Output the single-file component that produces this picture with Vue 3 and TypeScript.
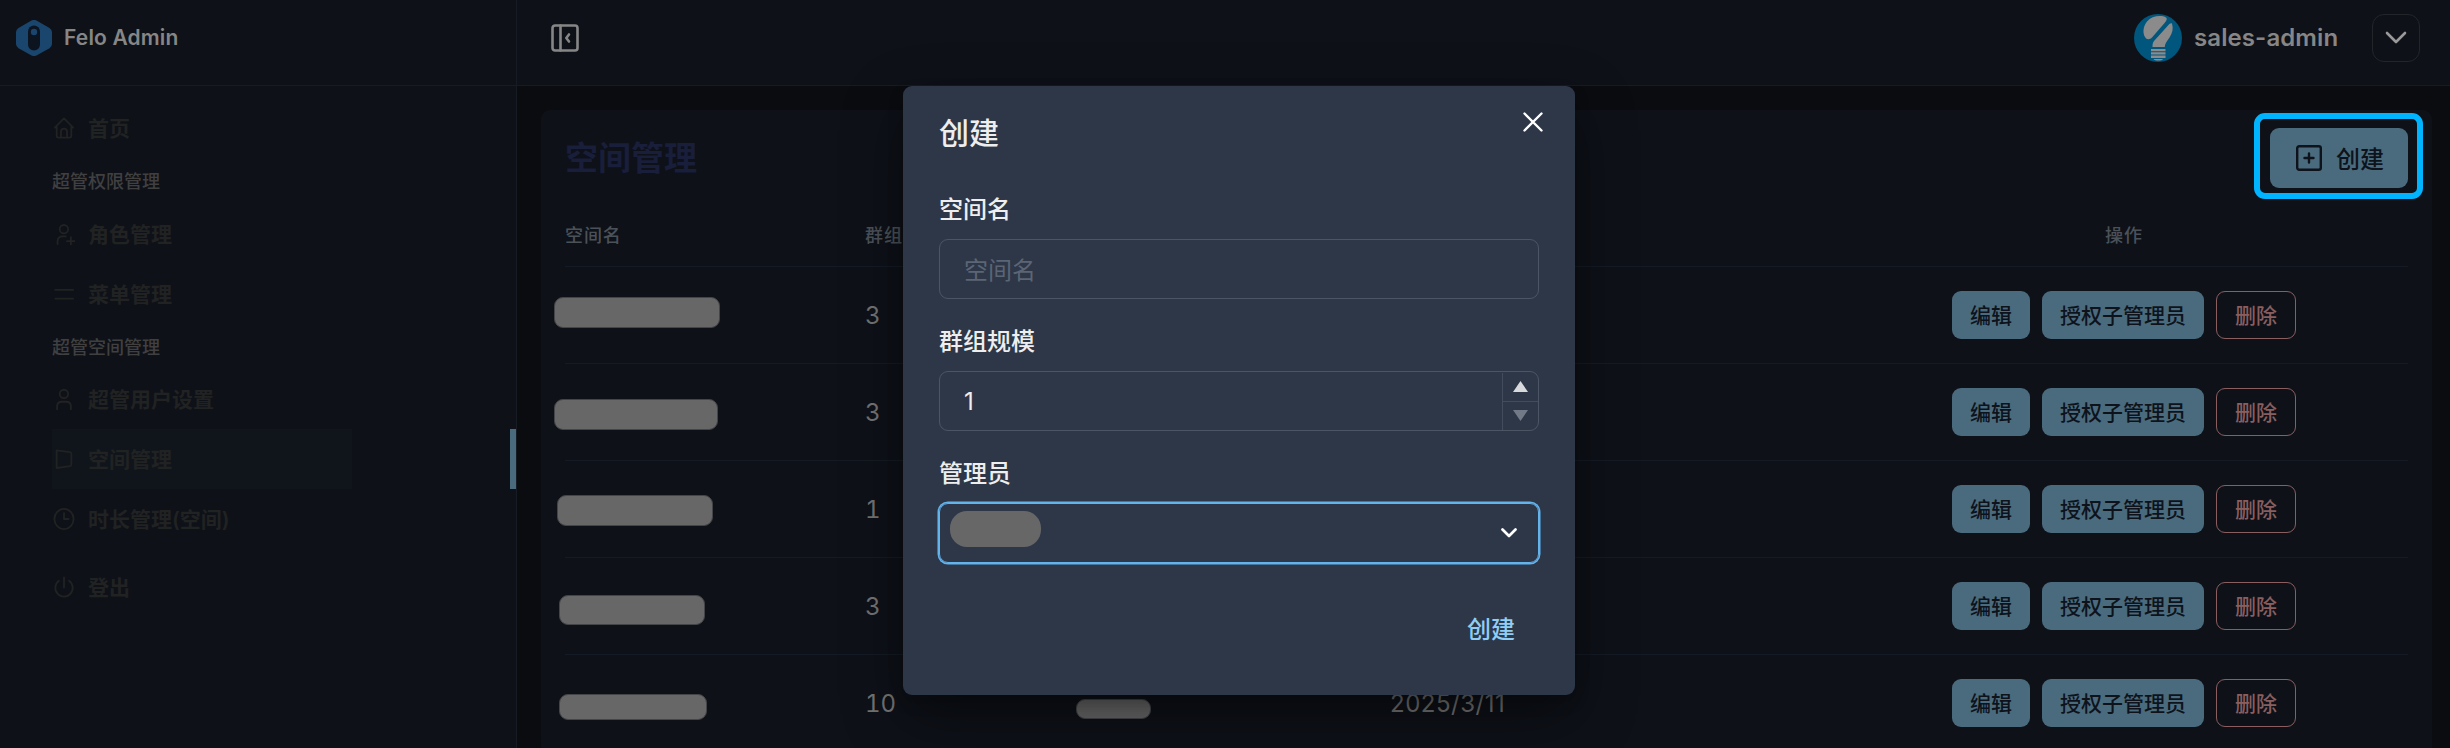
<script setup lang="ts">
interface Mask { x: number; y: number; w: number; h: number }
interface Row { size: string; mask: Mask; date?: string }
interface Item { icon: string; label: string; active?: boolean }
interface Group { title: string; items: Item[] }

const home: Item = { icon: 'home', label: '首页' }
const groups: Group[] = [
  { title: '超管权限管理', items: [{ icon: 'role', label: '角色管理' }, { icon: 'menu', label: '菜单管理' }] },
  {
    title: '超管空间管理',
    items: [
      { icon: 'user', label: '超管用户设置' },
      { icon: 'space', label: '空间管理', active: true },
      { icon: 'clock', label: '时长管理(空间)' },
    ],
  },
]
const icons: Record<string, string> = {
  home: 'M2 11.5 12 1.5l10 10M4 10v10.5a2 2 0 0 0 2 2h12a2 2 0 0 0 2-2V10M8.7 22.5V16a3.3 3.3 0 0 1 6.6 0v6.5',
  role: 'M16.5 6.8a4.6 4.6 0 1 1-9.2 0a4.6 4.6 0 1 1 9.2 0M5 23v-3c0-3.5 2-5.5 5.5-5.5H14M19.5 15.5v8.5M15.3 19.8h8.5',
  menu: 'M2.5 7.5h19.5M2.5 17h19.5',
  user: 'M16.5 6.5a4.6 4.6 0 1 1-9.2 0a4.6 4.6 0 1 1 9.2 0M4.5 23.5v-3.5c0-3 2-5 5-5h5c3 0 5 2 5 5v3.5',
  space: 'M4 2.5 18.5 4.5Q20 4.8 20 6V18Q20 19.500 18.500 19.800L4 21.800Z',
  clock: 'M22.500 12a10.500 11 0 1 1-21 0a10.500 11 0 1 1 21 0M12 5.500V12h5',
  power: 'M6.500 5.200a9.500 9.500 0 1 0 11 0M12 1.500v11',
}
const rows: Row[] = [
  { size: '3', mask: { x: -11, y: 30, w: 166, h: 31 } },
  { size: '3', mask: { x: -11, y: 35, w: 164, h: 31 } },
  { size: '1', mask: { x: -8, y: 34, w: 156, h: 31 } },
  { size: '3', mask: { x: -6, y: 37, w: 146, h: 30 } },
  { size: '10', date: '2025/3/11', mask: { x: -6, y: 39, w: 148, h: 26 } },
]
const maskStyle = (m: Mask) => ({ left: `${m.x}px`, top: `${m.y}px`, width: `${m.w}px`, height: `${m.h}px` })
</script>

<template>
  <div class="page">
    <aside class="sidebar">
      <div class="brand">
        <svg class="logo" viewBox="0 0 36 36">
          <path d="M15.500.600a5 5 0 0 1 5 0L33.500 8A5 5 0 0 1 36 12v12a5 5 0 0 1-2.500 4.200l-13 7.200a5 5 0 0 1-5 0l-13-7.200A5 5 0 0 1 0 24V12a5 5 0 0 1 2.500-4Z" fill="#1a456d" />
          <rect x="12" y="5.500" width="12" height="25" rx="6" fill="#0c1420" />
          <circle cx="18" cy="12" r="3.200" fill="#1a456d" />
        </svg>
        <span>Felo Admin</span>
      </div>
      <nav>
        <div class="item">
          <svg viewBox="0 0 24 24"><path :d="icons.home" /></svg><span>{{ home.label }}</span>
        </div>
        <template v-for="g in groups" :key="g.title">
          <div class="group">{{ g.title }}</div>
          <div v-for="i in g.items" :key="i.label" class="line" :class="{ active: i.active }">
            <div class="item">
              <svg viewBox="0 0 24 24"><path :d="icons[i.icon]" /></svg><span>{{ i.label }}</span>
            </div>
          </div>
        </template>
        <div class="item logout">
          <svg viewBox="0 0 24 24"><path :d="icons.power" /></svg><span>登出</span>
        </div>
      </nav>
    </aside>

    <div class="main">
      <header>
        <svg class="toggle" viewBox="0 0 28 28">
          <rect x="1.500" y="1.500" width="25" height="25" rx="2.500" />
          <path d="M9.500 1.500v25M18 10.500 15.300 14l2.700 3.500" />
        </svg>
        <div class="account">
          <svg class="avatar" viewBox="0 0 48 48">
            <circle cx="24" cy="24" r="24" fill="#00567c" />
            <path d="M32 3.500C27 .8 17.500 2 13 7.500 9 12.500 8.500 19 11 23c1.500 3 5 2.500 7 .5L31 8.500c1.500-2 2.500-4 1-5Z" fill="#8b8b8b" />
            <path d="M38 9.500c-1.500-.8-3 .5-4 2L20 27c-1.500 2-1.500 4-1.500 6h12.200c.3-4 2.300-5.500 4.800-9.500C38.500 19 39.500 14.500 38 9.500Z" fill="#8b8b8b" />
            <path d="M17 35h14.500v2.300H17ZM17 38.300h14.500v2.300H17ZM17 41.600h14.500v2.300H17ZM19.500 45h9.500c-1 2-8.500 2-9.500 0Z" fill="#8b8b8b" />
          </svg>
          <span class="name">sales-admin</span>
          <button class="more"><svg viewBox="0 0 22 14"><path d="M2 2l9 9 9-9" /></svg></button>
        </div>
      </header>

      <section class="card">
        <div class="card-head">
          <h2>空间管理</h2>
          <button class="create">
            <svg viewBox="0 0 26 26"><rect x="1.200" y="1.200" width="23.600" height="23.600" rx="2" /><path d="M13 8.500v9M8.500 13h9" /></svg>
            <span>创建</span>
            <i class="highlight"></i>
          </button>
        </div>
        <div class="row head">
          <div>空间名</div><div>群组</div><div></div><div></div><div class="center">操作</div>
        </div>
        <div v-for="(r, n) in rows" :key="n" class="row">
          <div class="cell"><i class="mask" :style="maskStyle(r.mask)"></i></div>
          <div class="cell num">{{ r.size }}</div>
          <div class="cell"><i v-if="r.date" class="mask small"></i></div>
          <div class="cell date">{{ r.date }}</div>
          <div class="cell actions">
            <button>编辑</button><button>授权子管理员</button><button class="danger">删除</button>
          </div>
        </div>
      </section>
    </div>

    <div class="modal">
      <svg class="close" viewBox="0 0 20 20"><path d="M1.500 1.500l17 17M18.500 1.500l-17 17" /></svg>
      <h3>创建</h3>
      <label>空间名</label>
      <div class="field placeholder"><span>空间名</span></div>
      <label>群组规模</label>
      <div class="field number">
        <span>1</span>
        <div class="stepper">
          <div><svg viewBox="0 0 15 11"><path d="M7.500 0 15 11H0Z" /></svg></div>
          <div class="down"><svg viewBox="0 0 15 11"><path d="M7.500 11 15 0H0Z" /></svg></div>
        </div>
      </div>
      <label>管理员</label>
      <div class="field select">
        <i class="chip"></i>
        <svg viewBox="0 0 16 10"><path d="M1.500 1.500 8 8l6.500-6.500" /></svg>
      </div>
      <div class="foot">创建</div>
    </div>
  </div>
</template>

<style>
body { background: #0b0c10; overflow: hidden; }
</style>
<style scoped>
* { box-sizing: border-box; }
.page {
  position: relative; display: flex; width: 2450px; height: 748px; overflow: hidden;
  background: #0b0c10; font-family: Inter, "Noto Sans CJK SC", sans-serif; color: #727272;
}
button { font: inherit; margin: 0; }
svg { flex: none; fill: none; stroke-linecap: round; stroke-linejoin: round; }
.sidebar { width: 517px; flex: none; background: #0e1118; border-right: 1px solid #171b24; }
.brand {
  display: flex; align-items: center; gap: 12px; height: 86px; padding: 0 0 10px 16px;
  border-bottom: 1px solid #171b24; color: #868686; font-size: 21px; font-weight: 600; letter-spacing: .15px;
}
.logo { width: 36px; height: 36px; }
nav { padding: 12px 0 0 52px; }
.item { display: flex; align-items: center; gap: 13px; width: 300px; height: 60px; padding-left: 1px; font-size: 21px; font-weight: 600; color: #212222; }
.item span { margin-top: -2px; }
.item svg { width: 22px; height: 22px; stroke: #212222; stroke-width: 2; }
.group { height: 45.500px; line-height: 47px; font-size: 18px; font-weight: 500; color: #404041; }
.line { display: flex; justify-content: space-between; }
.active .item { background: #10151c; }
.active::after { content: ""; width: 6px; height: 60px; background: #4a6b7e; }
.logout { margin-top: 8px; }

.main { flex: 1; min-width: 0; }
header { display: flex; align-items: center; justify-content: space-between; height: 86px; padding: 0 30px 10px 34px; background: #0e1118; border-bottom: 1px solid #171b24; }
.toggle { width: 28px; height: 28px; stroke: #868686; stroke-width: 2.600; }
.account { display: flex; align-items: center; }
.avatar { width: 48px; height: 48px; }
.name { margin-left: 12px; width: 190px; margin-right: -12px; font-size: 24px; font-weight: 600; letter-spacing: .1px; color: #868686; }
.more { display: flex; align-items: center; justify-content: center; width: 48px; height: 48px; padding: 0; background: none; border: 1px solid #22262b; border-radius: 12px; }
.more svg { width: 22px; height: 14px; stroke: #999; stroke-width: 2.600; }

.card { width: 1891px; height: 700px; margin: 24px 0 0 24px; padding: 18px 24px; background: #0e1118; border-radius: 9px; }
.card-head { display: flex; align-items: center; justify-content: space-between; height: 60px; }
h2 { margin: 0; font-size: 33px; line-height: 60px; font-weight: 600; color: #191e3a; }
.create { position: relative; display: flex; align-items: center; gap: 14px; width: 138px; height: 60px; padding: 0 0 0 26px; border: 0; border-radius: 9px; background: #4a6b7e; color: #0e131b; font-size: 24px; font-weight: 500; }
.create span { margin-top: -2px; }
.create svg { width: 26px; height: 26px; stroke: #0e131b; stroke-width: 2.400; }
.highlight { position: absolute; left: -16px; top: -15px; width: 169px; height: 86px; border: 6px solid #00b4ff; border-radius: 11px; }
.row { display: grid; grid-template-columns: 300px 225px 300px 562px 1fr; height: 97px; border-bottom: 1px solid #151b24; }
.row.head { height: 79px; padding-top: 17px; line-height: 62px; font-size: 18px; font-weight: 500; letter-spacing: .9px; color: #4b5158; }
.center { width: 344px; text-align: center; }
.cell { position: relative; display: flex; align-items: center; font-size: 24px; color: #737373; }
.num { font-variant-numeric: tabular-nums; }
.date { letter-spacing: .5px; }
.actions { gap: 12px; }
.actions button { height: 48px; padding: 0 18px; border: 0; border-radius: 9px; background: #4a6b7e; color: #0e131b; font-size: 21px; font-weight: 500; line-height: 47px; white-space: nowrap; }
.actions .danger { border: 1px solid #8a5e5f; background: none; color: #8a5e5f; line-height: 45px; }
.mask { position: absolute; background: #676767; border: 1px solid #444548; border-radius: 9px; }
.mask.small { left: -14px; top: 44px; width: 75px; height: 20px; border-radius: 9px; }

.modal {
  position: absolute; left: 903px; top: 86px; width: 672px; height: 609px; padding: 24px 36px;
  background: #2d3748; border-radius: 9px; color: #eeeeee;
  box-shadow: 0 7px 15px rgba(0, 0, 0, .2), 0 22px 60px rgba(0, 0, 0, .4);
}
.close { position: absolute; left: 620px; top: 26px; width: 20px; height: 20px; stroke: #fff; stroke-width: 2.400; }
h3 { margin: 0; padding-top: 1px; height: 45px; font-size: 30px; line-height: 45px; font-weight: 500; }
label { display: block; height: 36px; margin-bottom: 12px; padding-top: 1px; font-size: 24px; line-height: 36px; font-weight: 500; }
h3 + label { margin-top: 36px; }
.field { display: flex; align-items: center; height: 60px; margin-bottom: 24px; padding-left: 24px; border: 1px solid #4c5564; border-radius: 9px; font-size: 24px; }
.placeholder { color: #5c6574; }
.placeholder span { margin-top: -2px; }
.number { justify-content: space-between; }
.stepper { width: 36px; height: 57px; border-left: 1px solid #434c5c; }
.stepper div { display: flex; align-items: center; justify-content: center; height: 28px; }
.stepper .down { border-top: 1px solid #434c5c; }
.stepper svg { width: 15px; height: 11px; fill: #d7d9dc; }
.stepper .down svg { fill: #737a87; }
.select { justify-content: space-between; padding: 0 21px 0 10px; border: 1.500px solid #63b3ed; box-shadow: 0 0 0 1.500px #63b3ed; }
.select svg { width: 16px; height: 10px; stroke: #fff; stroke-width: 2.700; }
.chip { width: 91px; height: 36px; margin-top: -8px; border-radius: 17px; background: #676767; }
.foot { margin-top: 47px; padding-right: 24px; text-align: right; font-size: 24px; line-height: 40px; font-weight: 500; color: #90cdf4; }
</style>
